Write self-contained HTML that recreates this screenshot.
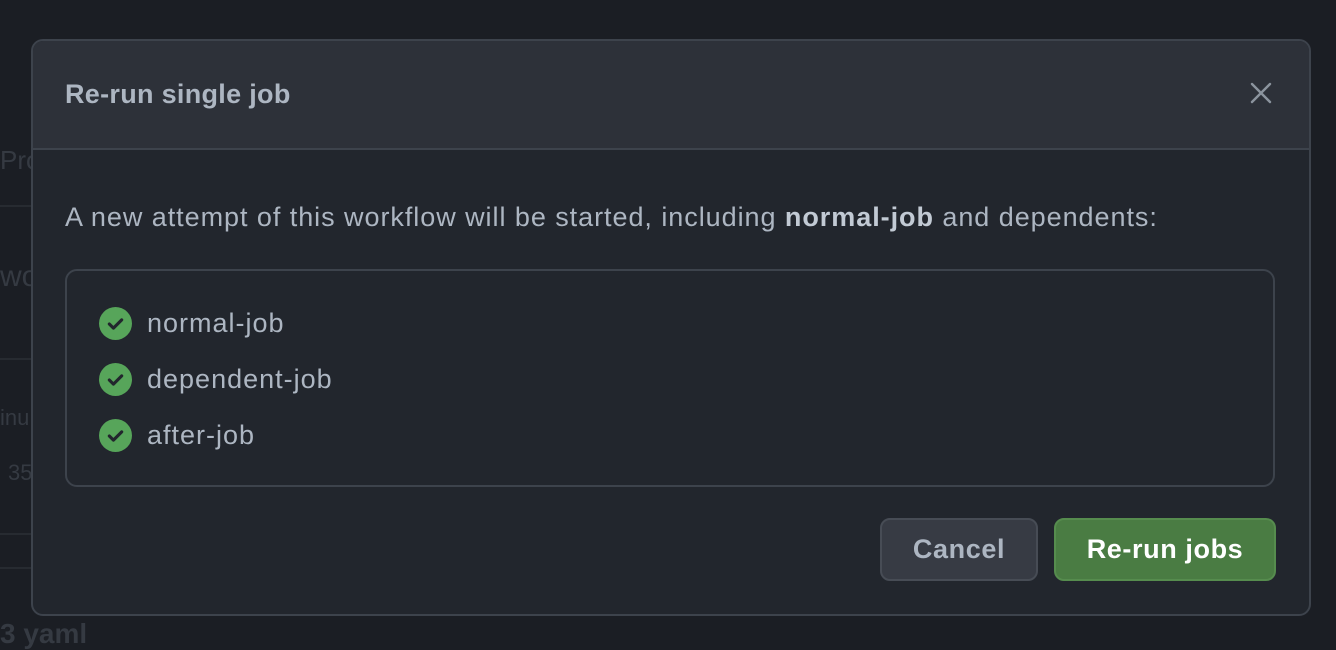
<!DOCTYPE html><html><head><style>
body{margin:0;width:1336px;height:640px;background:#1b1e24;font-family:"Liberation Sans",sans-serif;position:relative;overflow:hidden}
.bg{position:absolute;color:#353a42;font-size:26px}
.line{position:absolute;left:0;width:40px;height:2px;background:#272b31}
.modal{position:absolute;left:31px;top:39px;width:1276px;height:573px;background:#22262d;border:2px solid #3d434c;border-radius:12px;overflow:hidden}
.hd{height:107px;background:#2d3139;border-bottom:2px solid #3d434c;position:relative}
.hd h1{margin:0;position:absolute;left:32px;top:38px;font-size:27px;color:#adb6c2;font-weight:bold;letter-spacing:0.3px}
.x{position:absolute;right:36px;top:40px}
p{position:absolute;left:32px;top:161px;margin:0;font-size:27px;letter-spacing:0.95px;color:#adb6c2;white-space:nowrap}
p b{color:#c2cad4}
.box{position:absolute;left:32px;top:228px;width:1206px;height:214px;border:2px solid #3d434c;border-radius:12px}
.it{position:absolute;left:32px;font-size:27px;letter-spacing:1px;color:#adb6c2;display:flex;align-items:center}
.it svg{margin-right:15px}
.btn{position:absolute;top:477px;height:63px;border-radius:10px;font-size:27px;letter-spacing:0.6px;font-weight:bold;display:flex;align-items:center;justify-content:center;box-sizing:border-box}
</style></head><body>
<div class="bg" style="left:0;top:145px">Pro</div>
<div class="line" style="top:205px"></div>
<div class="bg" style="left:0;top:260px;font-size:30px">wo</div>
<div class="line" style="top:358px"></div>
<div class="bg" style="left:0;top:405px;font-size:22px">inu</div>
<div class="bg" style="left:8px;top:460px;font-size:22px">35</div>
<div class="line" style="top:533px"></div>
<div class="line" style="top:567px"></div>
<div class="bg" style="left:0;top:618px;font-weight:bold;font-size:28px">3 yaml</div>
<div class="modal">
<div class="hd"><h1>Re-run single job</h1>
<svg class="x" width="24" height="24" viewBox="0 0 24 24"><path d="M3 3L21 21M21 3L3 21" stroke="#8b949e" stroke-width="2.4" stroke-linecap="round"/></svg></div>
<p>A new attempt of this workflow will be started, including <b>normal-job</b> and dependents:</p>
<div class="box">
<div class="it" style="top:36px"><svg width="33" height="33" viewBox="0 0 32 32"><circle cx="16" cy="16" r="16" fill="#57a55a"/><path d="M10 16.5l4 4 8-8" stroke="#22262d" stroke-width="3" fill="none" stroke-linecap="round" stroke-linejoin="round"/></svg>normal-job</div>
<div class="it" style="top:92px"><svg width="33" height="33" viewBox="0 0 32 32"><circle cx="16" cy="16" r="16" fill="#57a55a"/><path d="M10 16.5l4 4 8-8" stroke="#22262d" stroke-width="3" fill="none" stroke-linecap="round" stroke-linejoin="round"/></svg>dependent-job</div>
<div class="it" style="top:148px"><svg width="33" height="33" viewBox="0 0 32 32"><circle cx="16" cy="16" r="16" fill="#57a55a"/><path d="M10 16.5l4 4 8-8" stroke="#22262d" stroke-width="3" fill="none" stroke-linecap="round" stroke-linejoin="round"/></svg>after-job</div>
</div>
<div class="btn" style="left:847px;width:158px;background:#373b44;border:2px solid #474c55;color:#adb6c2">Cancel</div>
<div class="btn" style="left:1021px;width:222px;background:#4a7c43;border:2px solid #568c4e;color:#fff">Re-run jobs</div>
</div>
</body></html>
